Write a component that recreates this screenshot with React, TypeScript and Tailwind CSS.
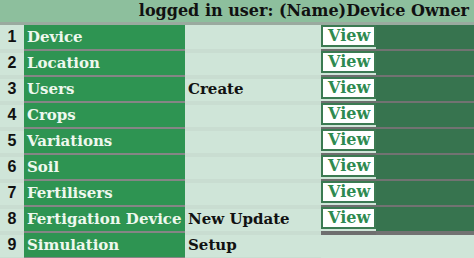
const rows = [
  { n: 1, name: 'Device', action: '', view: true },
  { n: 2, name: 'Location', action: '', view: true },
  { n: 3, name: 'Users', action: 'Create', view: true },
  { n: 4, name: 'Crops', action: '', view: true },
  { n: 5, name: 'Variations', action: '', view: true },
  { n: 6, name: 'Soil', action: '', view: true },
  { n: 7, name: 'Fertilisers', action: '', view: true },
  { n: 8, name: 'Fertigation Device', action: 'New Update', view: true },
  { n: 9, name: 'Simulation', action: 'Setup', view: false },
]

export default function App() {
  return (
    <div className="h-[258px] w-[474px] overflow-hidden bg-[#cfe5d8]">
      <div className="flex h-[25px] items-center justify-end border-b-[3px] border-[#9aaa9f] bg-[#8dbf9d] pr-[5px] font-['DejaVu_Serif'] text-[16px] font-bold text-[#111]">
        logged in user: (Name)Device Owner
      </div>
      {rows.map(r => (
        <div key={r.n} className="grid h-[26px] grid-cols-[24px_161px_136px_55px_1fr]">
          <div className="flex items-center justify-center border-b-4 border-[#c9ddd1] font-['Liberation_Sans'] text-[16px] font-bold text-[#111]">
            {r.n}
          </div>
          <div className="flex items-center border-b-4 border-[#858585] bg-[#2e9452] pl-[3px] font-['DejaVu_Serif'] text-[15px] font-bold text-[#eef8ee]">
            {r.name}
          </div>
          <div className="flex items-center border-b-4 border-[#c9ddd1] pl-[3px] font-['DejaVu_Serif'] text-[15px] font-bold text-[#111]">
            {r.action}
          </div>
          {r.view ? (
            <>
              <div className="border-b-4 border-[#6e6e6e]">
                <div className="flex h-[22px] items-center border-2 border-[#3b7a52] bg-white pl-[5px] font-['DejaVu_Serif'] text-[16px] font-bold text-[#2e8a50]">
                  View
                </div>
              </div>
              <div className="border-b-4 border-[#727272] bg-[#37744f]" />
            </>
          ) : (
            <>
              <div />
              <div />
            </>
          )}
        </div>
      ))}
    </div>
  )
}
